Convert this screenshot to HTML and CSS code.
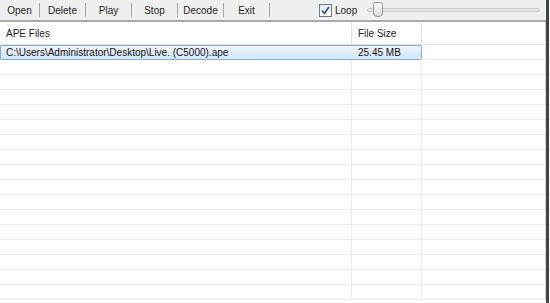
FILE: index.html
```html
<!DOCTYPE html>
<html>
<head>
  <title>APE Player</title>
  <meta name="viewport" content="width=device-width, initial-scale=1">
  <link rel="stylesheet" href="styles.css">
</head>
<body>
  <div class="window">
    <div class="toolbar">
      <span class="tool first">Open</span>
      <span class="tool">Delete</span>
      <span class="tool">Play</span>
      <span class="tool">Stop</span>
      <span class="tool">Decode</span>
      <span class="tool">Exit</span>
      <label class="loop">
        <span class="check">
          <svg width="11" height="11" viewBox="0 0 11 11"><path d="M2 5.5 L4.5 8.5 L9 2" fill="none" stroke="#2c4f8a" stroke-width="1.6"/></svg>
        </span>
        Loop
      </label>
      <div class="slider">
        <div class="track"></div>
        <div class="thumb"></div>
      </div>
    </div>

    <div class="list">
      <div class="row head">
        <div class="cell name">APE Files</div>
        <div class="cell size">File Size</div>
        <div class="cell rest"></div>
      </div>
      <div class="row selected">
        <div class="cell name">C:\Users\Administrator\Desktop\Live. (C5000).ape</div>
        <div class="cell size">25.45 MB</div>
        <div class="cell rest"></div>
      </div>
      <div class="row"><div class="cell name"></div><div class="cell size"></div><div class="cell rest"></div></div>
      <div class="row"><div class="cell name"></div><div class="cell size"></div><div class="cell rest"></div></div>
      <div class="row"><div class="cell name"></div><div class="cell size"></div><div class="cell rest"></div></div>
      <div class="row"><div class="cell name"></div><div class="cell size"></div><div class="cell rest"></div></div>
      <div class="row"><div class="cell name"></div><div class="cell size"></div><div class="cell rest"></div></div>
      <div class="row"><div class="cell name"></div><div class="cell size"></div><div class="cell rest"></div></div>
      <div class="row"><div class="cell name"></div><div class="cell size"></div><div class="cell rest"></div></div>
      <div class="row"><div class="cell name"></div><div class="cell size"></div><div class="cell rest"></div></div>
      <div class="row"><div class="cell name"></div><div class="cell size"></div><div class="cell rest"></div></div>
      <div class="row"><div class="cell name"></div><div class="cell size"></div><div class="cell rest"></div></div>
      <div class="row"><div class="cell name"></div><div class="cell size"></div><div class="cell rest"></div></div>
      <div class="row"><div class="cell name"></div><div class="cell size"></div><div class="cell rest"></div></div>
      <div class="row"><div class="cell name"></div><div class="cell size"></div><div class="cell rest"></div></div>
      <div class="row"><div class="cell name"></div><div class="cell size"></div><div class="cell rest"></div></div>
      <div class="row"><div class="cell name"></div><div class="cell size"></div><div class="cell rest"></div></div>
      <div class="row"><div class="cell name"></div><div class="cell size"></div><div class="cell rest"></div></div>
    </div>
  </div>
</body>
</html>
```

FILE: styles.css
```css
html, body {
  margin: 0;
  padding: 0;
  background: #ffffff;
}
body {
  width: 550px;
  height: 303px;
  overflow: hidden;
  font-family: "Liberation Sans", Arial, sans-serif;
  font-size: 10px;
  color: #1e1e1e;
}
.window {
  width: 546px;
  height: 303px;
  border-right: 3px solid #3c4550;
  overflow: hidden;
}
.toolbar {
  display: flex;
  align-items: center;
  height: 20px;
  background: #f0f0f0;
  border-bottom: 2px solid #a9a9a9;
}
.tool {
  width: 45px;
  height: 14px;
  line-height: 15px;
  text-align: center;
  border-right: 1px solid #a8a8a8;
}
.tool.first {
  width: 39px;
}
.loop {
  display: flex;
  align-items: center;
  gap: 3px;
  margin-left: 49px;
}
.check {
  display: flex;
  align-items: center;
  justify-content: center;
  width: 11px;
  height: 11px;
  border: 1px solid #6d7a8c;
  background: linear-gradient(#e6ecf4, #ffffff);
}
.slider {
  position: relative;
  margin-left: 10px;
  width: 173px;
  height: 20px;
}
.track {
  position: absolute;
  left: 0;
  right: 0;
  top: 8px;
  height: 2px;
  border: 1px solid #cfcfcf;
  border-radius: 2px;
  background: #e6e6e6;
}
.thumb {
  position: absolute;
  left: 6px;
  top: 2px;
  width: 8px;
  height: 13px;
  border: 1px solid #9a9a9a;
  border-radius: 2px 2px 4px 4px;
  background: linear-gradient(#fbfbfb, #dcdcdc);
}
.list {
  display: flex;
  flex-direction: column;
  border-right: 1px solid #d4d4d4;
}
.row {
  display: flex;
  height: 14px;
  border-bottom: 1px solid #ececec;
}
.cell {
  box-sizing: border-box;
  padding-left: 6px;
  line-height: 14px;
  white-space: nowrap;
}
.name {
  width: 352px;
  border-right: 1px solid #ececec;
}
.size {
  width: 70px;
  border-right: 1px solid #ececec;
}
.rest {
  flex: 1;
}
.head {
  height: 22px;
  border-bottom: 1px solid #e2e2e2;
}
.head .cell {
  line-height: 23px;
  border-color: #e2e2e2;
}
.selected .name,
.selected .size {
  background: linear-gradient(#eef5fd, #d6e6fa);
  border-top: 1px solid #84acdd;
  border-bottom: 1px solid #84acdd;
  line-height: 13px;
  height: 15px;
  color: #111111;
}
.selected .name {
  border-left: 1px solid #84acdd;
  border-right: none;
  border-radius: 2px 0 0 2px;
  padding-left: 5px;
}
.selected .size {
  border-right: 1px solid #84acdd;
  border-radius: 0 2px 2px 0;
}
```
